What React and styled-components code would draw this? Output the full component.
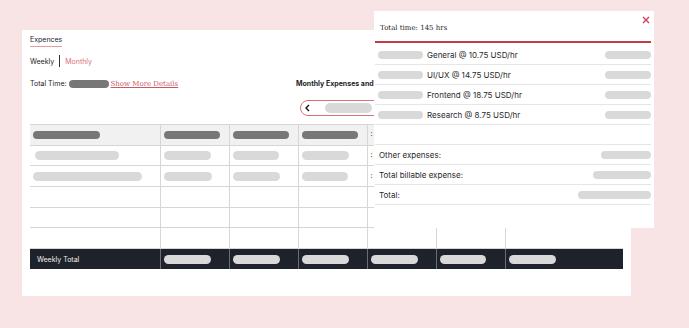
import React from 'react';
import styled, { createGlobalStyle } from 'styled-components';

const Global = createGlobalStyle`
  html, body { margin: 0; padding: 0; }
  body {
    background: #f8e4e5;
    font-family: Inter, "Noto Sans", sans-serif;
    color: #232323;
  }
`;

const Page = styled.div`
  width: 689px;
  height: 328px;
  padding: 30px 0 0 22px;
  box-sizing: border-box;
  position: relative;
  overflow: hidden;
`;

const Card = styled.section`
  width: 609px;
  height: 266px;
  background: #fff;
  padding: 5px 8px 0;
  box-sizing: border-box;
  display: flex;
  flex-direction: column;
  align-items: flex-start;
`;

const Tab = styled.div`
  font-size: 7px;
  line-height: 10px;
  padding-bottom: 1px;
  border-bottom: 1px solid #e39ba2;
`;

const Switch = styled.div`
  display: flex;
  align-items: center;
  margin-top: 8px;
  height: 12px;
  font-size: 7px;
`;

const SwitchItem = styled.span`
  color: ${p => (p.$active ? '#d9707a' : '#232323')};
`;

const Divider = styled.span`
  width: 1px;
  height: 12px;
  background: #333;
  margin: 0 5px;
`;

const Toolbar = styled.div`
  align-self: stretch;
  display: flex;
  justify-content: space-between;
  align-items: flex-start;
  margin-top: 12px;
`;

const TotalTime = styled.div`
  display: flex;
  align-items: center;
  gap: 2px;
  font-size: 7px;
  line-height: 10px;
`;

const Pill = styled.span`
  display: inline-block;
  flex: none;
  width: ${p => p.$w}px;
  height: ${p => p.$h || 8}px;
  border-radius: 5px;
  background: ${p => (p.$dark ? '#777' : '#d9d9d9')};
  vertical-align: middle;
`;

const MoreLink = styled.a`
  font-family: "DejaVu Serif", "Liberation Serif", serif;
  font-size: 7px;
  color: #c85a68;
  text-decoration: underline;
  cursor: pointer;
`;

const Summary = styled.div`
  width: 327px;
  display: flex;
  flex-direction: column;
  align-items: flex-start;
`;

const SummaryTitle = styled.div`
  font-size: 7px;
  line-height: 10px;
  font-weight: 700;
  white-space: nowrap;
`;

const Nav = styled.div`
  margin: 11px 0 0 4px;
  width: 130px;
  height: 16px;
  border: 1px solid #d9707a;
  border-radius: 9px;
  box-sizing: border-box;
  display: flex;
  align-items: center;
  padding-left: 3px;
  gap: 14px;
`;

const Table = styled.table`
  margin-top: 8px;
  width: 593px;
  border-collapse: collapse;
  table-layout: fixed;
  font-size: 7px;
`;

const Cell = styled.td`
  height: 20.7px;
  padding: 0 3px;
  border-top: 1px solid #d6d6d6;
  border-left: 1px solid #d6d6d6;
  &:first-child { border-left: none; }
  box-sizing: border-box;
  white-space: nowrap;
  overflow: hidden;
`;

const HeadRow = styled.tr`
  background: #f1f1f1;
`;

const TotalRow = styled.tr`
  background: #1e222a;
  color: #eee;
  td { border-left-color: #6a6d72; border-top-color: #d6d6d6; }
  td:first-child { padding-left: 7px; }
`;

const Popup = styled.aside`
  position: absolute;
  left: 374px;
  top: 11px;
  width: 280px;
  height: 217px;
  background: #fff;
  padding: 0 3px 0 1px;
  box-sizing: border-box;
`;

const PopHeader = styled.div`
  height: 32px;
  display: flex;
  align-items: flex-end;
  padding: 0 0 9px 5px;
  box-sizing: border-box;
  border-bottom: 2px solid #c23b48;
  font-family: "DejaVu Serif", "Liberation Serif", serif;
  font-size: 7px;
  color: #1e1e1e;
  margin-bottom: 2px;
`;

const Close = styled.button`
  position: absolute;
  top: 3px;
  right: 2px;
  border: none;
  background: none;
  padding: 0;
  width: 12px;
  height: 12px;
  display: flex;
  align-items: center;
  justify-content: center;
`;

const PopRow = styled.div`
  height: 20px;
  display: flex;
  align-items: center;
  padding: 0 0 0 3px;
  border-bottom: 1px solid #e6e6e6;
  font-size: 8px;
  color: #2a2a2a;
  box-sizing: border-box;
`;

const RateName = styled.span`
  margin-left: 4px;
  flex: 1;
`;

const Label = styled.span`
  flex: 1;
  margin-left: 1px;
`;

const Chevron = () => (
  <svg width="7" height="8" viewBox="0 0 7 8">
    <path d="M5 1 L2 4 L5 7" fill="none" stroke="#111" strokeWidth="1.4" />
  </svg>
);

const rows = [
  { first: 84, firstOffset: 2, cells: [47, 46, 47] },
  { first: 109, firstOffset: 0, cells: [48, 47, 46] },
];

const App = () => (
  <Page>
    <Global />
    <Card>
      <Tab>Expences</Tab>
      <Switch>
        <SwitchItem>Weekly</SwitchItem>
        <Divider />
        <SwitchItem $active>Monthly</SwitchItem>
      </Switch>
      <Toolbar>
        <TotalTime>
          Total Time: <Pill $dark $w={40} />
          <MoreLink>Show More Details</MoreLink>
        </TotalTime>
        <Summary>
          <SummaryTitle>Monthly Expenses and Totals</SummaryTitle>
          <Nav>
            <Chevron />
            <Pill $w={47} $h={10} />
          </Nav>
        </Summary>
      </Toolbar>
      <Table>
        <colgroup>
          <col style={{ width: 130 }} />
          <col style={{ width: 69 }} />
          <col style={{ width: 69 }} />
          <col style={{ width: 69 }} />
          <col style={{ width: 69 }} />
          <col style={{ width: 69 }} />
          <col style={{ width: 118 }} />
        </colgroup>
        <tbody>
          <HeadRow>
            <Cell><Pill $dark $w={67} /></Cell>
            <Cell><Pill $dark $w={56} /></Cell>
            <Cell><Pill $dark $w={56} /></Cell>
            <Cell><Pill $dark $w={56} /></Cell>
            <Cell>: Total</Cell>
            <Cell />
            <Cell />
          </HeadRow>
          {rows.map((r, i) => (
            <tr key={i}>
              <Cell><Pill $w={r.first} $h={9} style={{ marginLeft: r.firstOffset }} /></Cell>
              {r.cells.map((w, j) => (
                <Cell key={j}><Pill $w={w} $h={9} /></Cell>
              ))}
              <Cell>: 0</Cell>
              <Cell />
              <Cell />
            </tr>
          ))}
          {[0, 1, 2].map(i => (
            <tr key={'e' + i}>
              {[0, 1, 2, 3, 4, 5, 6].map(j => <Cell key={j} />)}
            </tr>
          ))}
          <TotalRow>
            <Cell>Weekly Total</Cell>
            {[47, 47, 47, 47, 46, 47].map((w, j) => (
              <Cell key={j}><Pill $w={w} $h={9} /></Cell>
            ))}
          </TotalRow>
        </tbody>
      </Table>
    </Card>

    <Popup>
      <Close aria-label="close">
        <svg width="8" height="8" viewBox="0 0 8 8">
          <path d="M1 1 L7 7 M7 1 L1 7" stroke="#d63a5c" strokeWidth="1.4" />
        </svg>
      </Close>
      <PopHeader>Total time: 145 hrs</PopHeader>
      {['General @ 10.75 USD/hr', 'UI/UX @ 14.75 USD/hr', 'Frontend @ 18.75 USD/hr', 'Research @ 8.75 USD/hr'].map(t => (
        <PopRow key={t}>
          <Pill $w={45} />
          <RateName>{t}</RateName>
          <Pill $w={46} />
        </PopRow>
      ))}
      <PopRow />
      <PopRow>
        <Label>Other expenses:</Label>
        <Pill $w={50} />
      </PopRow>
      <PopRow>
        <Label>Total billable expense:</Label>
        <Pill $w={58} />
      </PopRow>
      <PopRow>
        <Label>Total:</Label>
        <Pill $w={73} />
      </PopRow>
    </Popup>
  </Page>
);

export default App;
